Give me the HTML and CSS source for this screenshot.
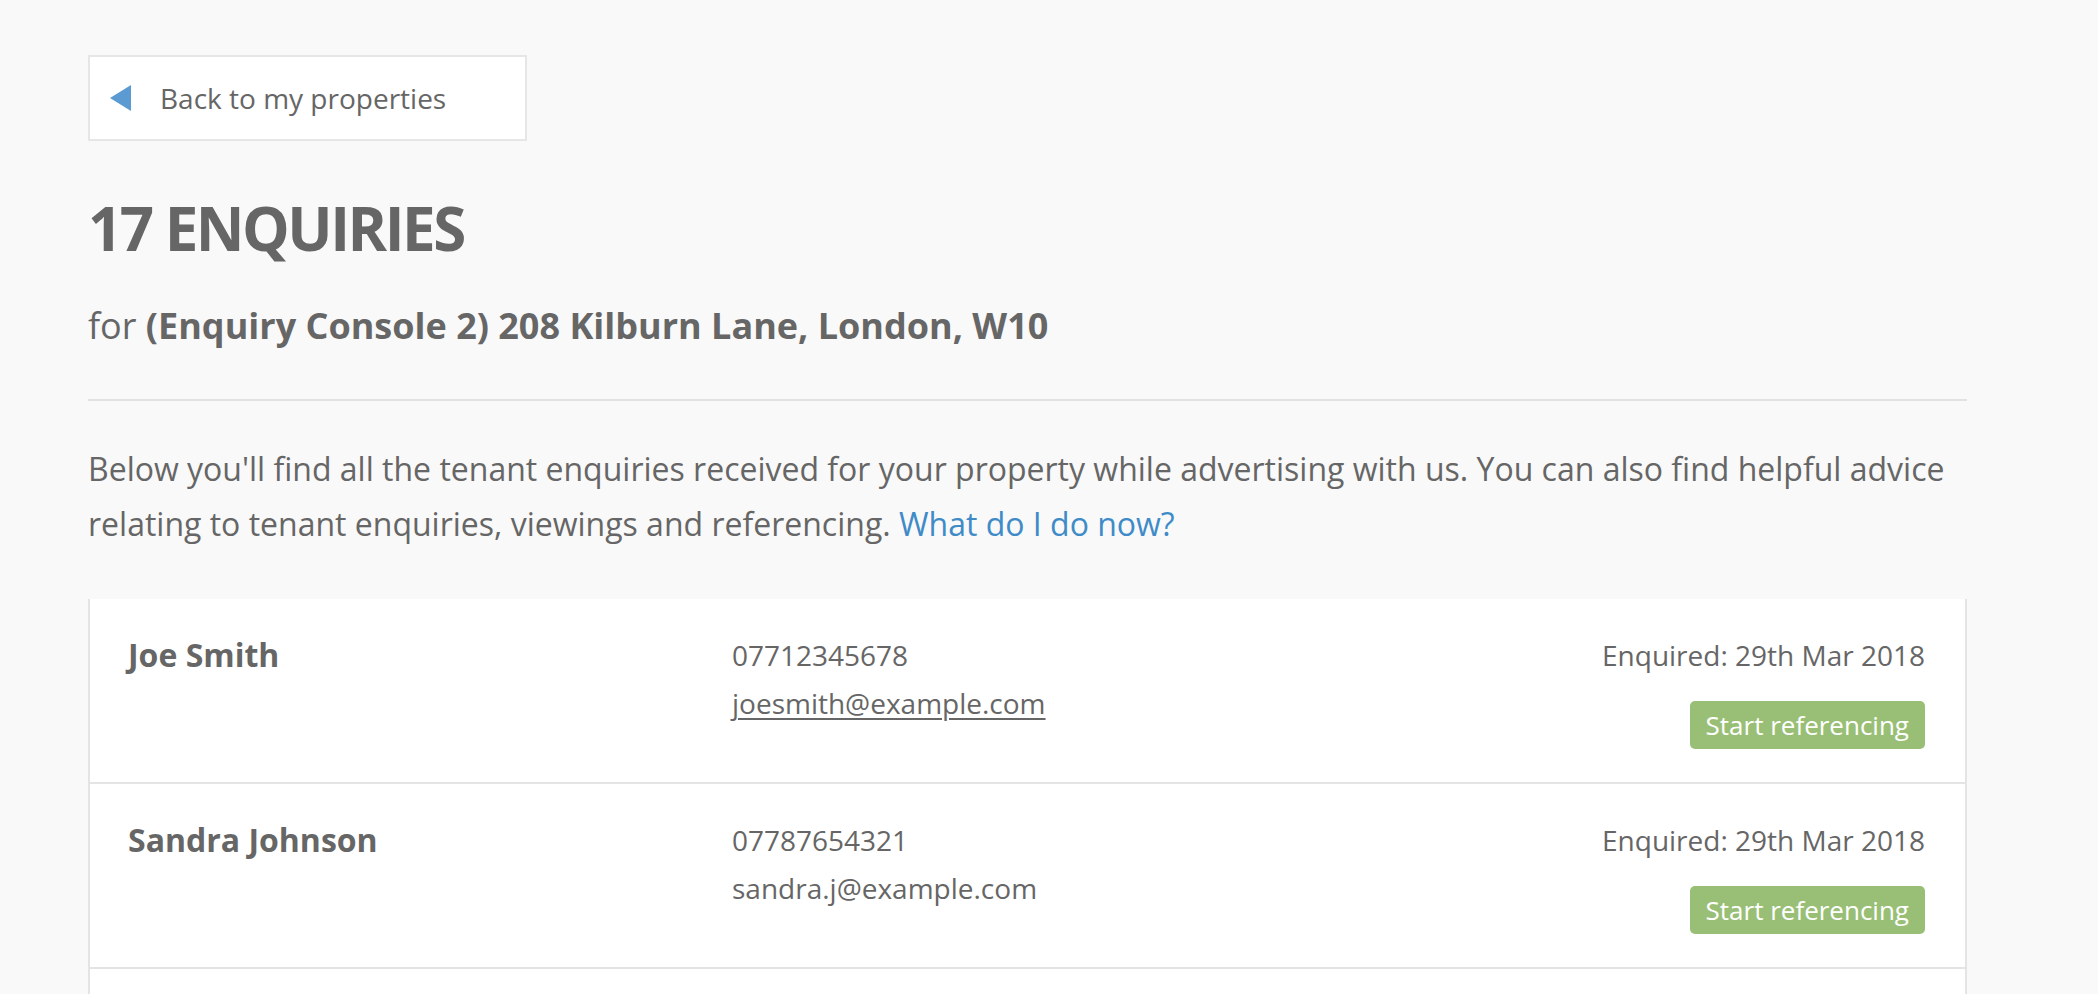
FILE: index.html
```html
<!DOCTYPE html>
<html lang="en">
<head>
<meta charset="utf-8">
<title>17 Enquiries</title>
<link rel="stylesheet" href="styles.css">
</head>
<body>
<main class="page">
  <a class="back" href="#">
    <svg class="back-icon" width="21" height="26" viewBox="0 0 21 26" aria-hidden="true"><polygon points="21,0 21,26 0,13" fill="#5b9bd1"/></svg>
    <span>Back to my properties</span>
  </a>
  <h1 class="title">17 ENQUIRIES</h1>
  <p class="subtitle">for <strong>(Enquiry Console 2) 208 Kilburn Lane, London, W10</strong></p>
  <hr class="rule">
  <p class="intro">Below you'll find all the tenant enquiries received for your property while advertising with us. You can also find helpful advice relating to tenant enquiries, viewings and referencing. <a class="link" href="#">What do I do now?</a></p>
  <section class="list">
    <div class="row">
      <div class="name">Joe Smith</div>
      <div class="contact">
        <div>07712345678</div>
        <div><a class="email" href="#">joesmith@example.com</a></div>
      </div>
      <div class="meta">
        <div>Enquired: 29th Mar 2018</div>
        <a class="btn" href="#">Start referencing</a>
      </div>
    </div>
    <div class="row">
      <div class="name">Sandra Johnson</div>
      <div class="contact">
        <div>07787654321</div>
        <div>sandra.j@example.com</div>
      </div>
      <div class="meta">
        <div>Enquired: 29th Mar 2018</div>
        <a class="btn" href="#">Start referencing</a>
      </div>
    </div>
    <div class="row">
      <div class="name">Michael Brown</div>
      <div class="contact">
        <div>07700900123</div>
        <div>m.brown@example.com</div>
      </div>
      <div class="meta">
        <div>Enquired: 28th Mar 2018</div>
        <a class="btn" href="#">Start referencing</a>
      </div>
    </div>
  </section>
</main>
</body>
</html>
```

FILE: styles.css
```css
html, body {
  margin: 0;
  padding: 0;
  background: #f9f9f9;
}
body {
  font-family: "Open Sans", "Liberation Sans", sans-serif;
  color: #666666;
}
.page {
  width: 1879px;
  padding: 55px 0 0 88px;
  box-sizing: content-box;
}
.back {
  display: flex;
  align-items: center;
  gap: 29px;
  width: 439px;
  height: 86px;
  box-sizing: border-box;
  padding-left: 20px;
  background: #ffffff;
  border: 2px solid #e6e6e6;
  color: #666666;
  text-decoration: none;
  font-size: 28px;
}
.back-icon {
  display: block;
  flex: none;
}
.title {
  margin: 51px 0 0;
  font-size: 60px;
  line-height: 72px;
  font-weight: 700;
  letter-spacing: -2.5px;
}
.subtitle {
  margin: 40px 0 0;
  font-size: 36px;
  line-height: 44px;
}
.subtitle strong {
  font-weight: 700;
}
.rule {
  margin: 51px 0 0;
  border: 0;
  border-top: 2px solid #e2e2e2;
  height: 0;
}
.intro {
  margin: 40px 0 0;
  font-size: 32px;
  line-height: 55px;
}
.link {
  color: #3f8bc8;
  text-decoration: none;
}
.list {
  margin-top: 48px;
  background: #ffffff;
  border-left: 2px solid #e4e4e4;
  border-right: 2px solid #e4e4e4;
}
.row {
  display: flex;
  padding: 32px 40px 33px 38px;
  border-bottom: 2px solid #e4e4e4;
  font-size: 28px;
  line-height: 48px;
}
.name {
  width: 604px;
  flex: none;
  font-size: 32px;
  font-weight: 700;
}
.contact {
  flex: 1;
}
.email {
  color: #666666;
  text-decoration: underline;
  text-underline-offset: 4px;
  text-decoration-thickness: 2px;
}
.meta {
  display: flex;
  flex-direction: column;
  align-items: flex-end;
  gap: 22px;
}
.btn {
  display: block;
  height: 48px;
  padding: 0 16px;
  border-radius: 5px;
  background: #99bf76;
  color: #ffffff;
  text-decoration: none;
  font-size: 26px;
  line-height: 48px;
}
```
